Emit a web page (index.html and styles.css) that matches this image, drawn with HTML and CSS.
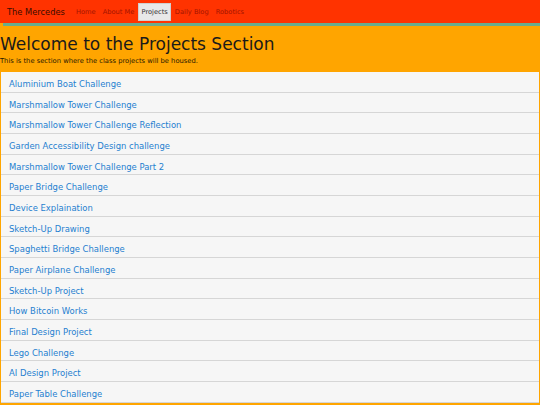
FILE: index.html
```html
<!DOCTYPE html>
<html>
<head>
<meta charset="utf-8">
<link rel="stylesheet" href="styles.css">
</head>
<body>
<nav class="navbar">
  <span class="brand">The Mercedes</span>
  <a class="nav-link" href="#">Home</a>
  <a class="nav-link" href="#">About Me</a>
  <a class="nav-link active" href="#">Projects</a>
  <a class="nav-link" href="#">Daily Blog</a>
  <a class="nav-link" href="#">Robotics</a>
</nav>
<div class="accent"></div>
<header class="intro">
  <h1>Welcome to the Projects Section</h1>
  <p>This is the section where the class projects will be housed.</p>
</header>
<ul class="list">
  <li><a href="#">Aluminium Boat Challenge</a></li>
  <li><a href="#">Marshmallow Tower Challenge</a></li>
  <li><a href="#">Marshmallow Tower Challenge Reflection</a></li>
  <li><a href="#">Garden Accessibility Design challenge</a></li>
  <li><a href="#">Marshmallow Tower Challenge Part 2</a></li>
  <li><a href="#">Paper Bridge Challenge</a></li>
  <li><a href="#">Device Explaination</a></li>
  <li><a href="#">Sketch-Up Drawing</a></li>
  <li><a href="#">Spaghetti Bridge Challenge</a></li>
  <li><a href="#">Paper Airplane Challenge</a></li>
  <li><a href="#">Sketch-Up Project</a></li>
  <li><a href="#">How Bitcoin Works</a></li>
  <li><a href="#">Final Design Project</a></li>
  <li><a href="#">Lego Challenge</a></li>
  <li><a href="#">AI Design Project</a></li>
  <li><a href="#">Paper Table Challenge</a></li>
</ul>
</body>
</html>
```
FILE: styles.css
```css
html, body {
  margin: 0;
  padding: 0;
}
body {
  background: #ffa500;
  font-family: "DejaVu Sans", Verdana, sans-serif;
  color: #1a1a1a;
  overflow: hidden;
}
.navbar {
  background: #ff3300;
  height: 23px;
  display: flex;
  align-items: center;
  padding: 0 0 0 7px;
}
.brand {
  font-size: 8.3px;
  color: #3a0d00;
  margin-right: 8px;
}
.nav-link {
  font-size: 6.7px;
  color: #a31400;
  text-decoration: none;
  padding: 4px 3px;
  margin-right: 1px;
}
.nav-link.active {
  background: #e8e8e8;
  color: #333;
  border: 1px solid #d0d0d0;
  padding: 4px 2px;
}
.accent {
  height: 3px;
  margin-left: 3px;
  background: #6aad8c;
}
.intro {
  padding: 8px 0 6px 0;
}
.intro h1 {
  margin: 0;
  font-weight: normal;
  font-size: 17px;
  line-height: 20px;
  color: #1a1a1a;
}
.intro p {
  margin: 3px 0 0 0;
  font-size: 6.75px;
  line-height: 9px;
  color: #2a1a00;
}
.list {
  list-style: none;
  margin: 0 1px;
  padding: 0;
}
.list li {
  background: #f6f6f6;
  border-bottom: 1px solid #d6d6d6;
  box-shadow: 0 1px 0 #e4e4e4;
  padding: 3px 8px;
  line-height: 13.67px;
  height: 13.67px;
}
.list a {
  font-size: 8.45px;
  color: #1e7fd0;
  text-decoration: none;
}
```
